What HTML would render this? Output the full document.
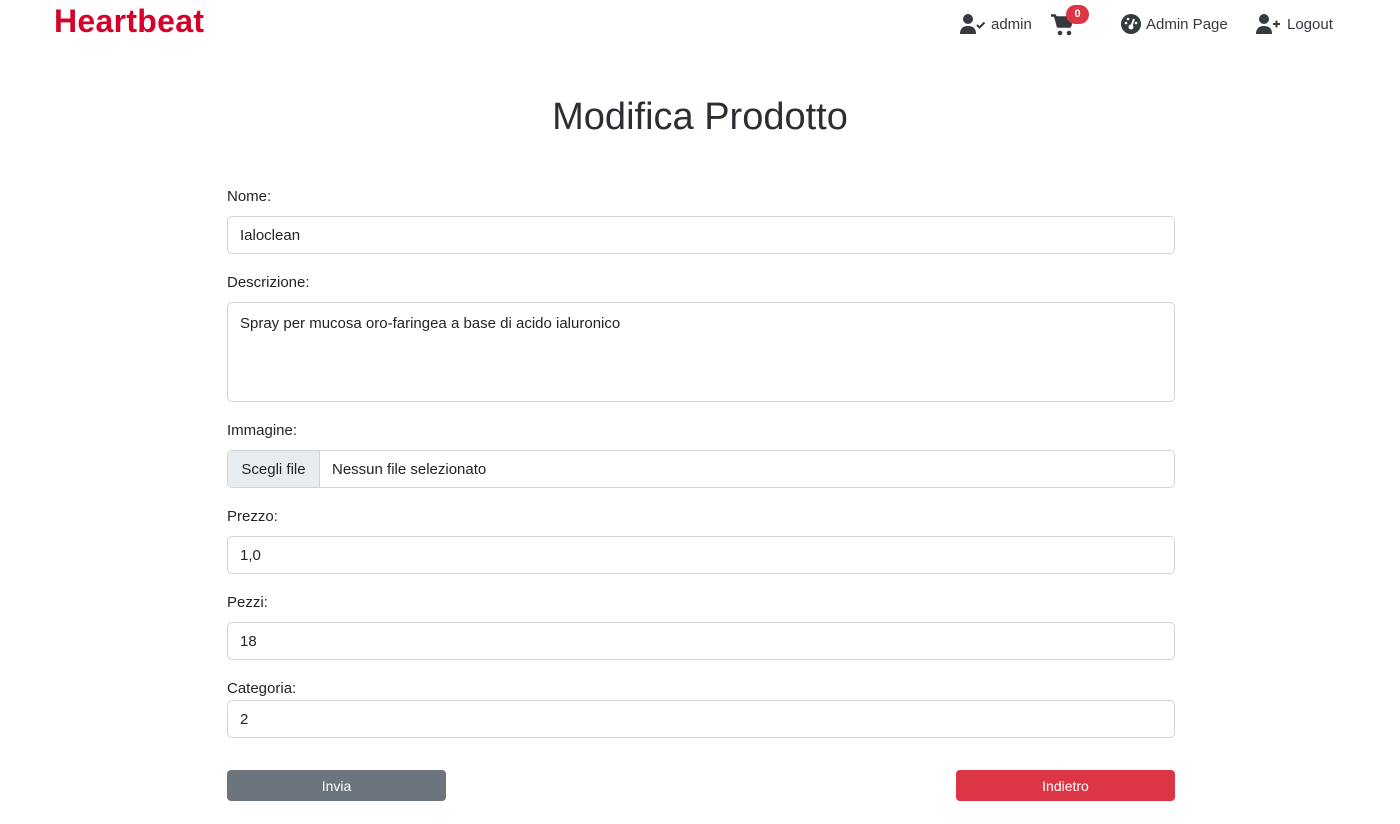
<!DOCTYPE html>
<html><head><meta charset="utf-8"><style>
*{box-sizing:border-box;margin:0;padding:0}
body{width:1400px;height:824px;background:#fff;font-family:"Liberation Sans",sans-serif;color:#212529;position:relative;overflow:hidden}
.a{position:absolute}
.brand{left:54px;top:3px;font-size:32px;font-weight:bold;color:#d6002a;letter-spacing:0.3px}
.nav{top:14px;font-size:15px;color:#343a40;display:flex;align-items:center;gap:5px}
h1{position:absolute;left:0;width:1400px;top:96px;text-align:center;font-size:38px;font-weight:300;color:#2b2f33}
.lbl{left:227px;font-size:15px;margin-top:1px}
.inp{left:227px;width:948px;height:38px;border:1px solid #ced4da;border-radius:5px;padding:0 12px;font-size:15px;line-height:38px}
.btn{top:770px;width:219px;height:31px;border-radius:4px;color:#fff;font-size:14px;text-align:center;line-height:32px}
</style></head><body>
<div class="a brand">Heartbeat</div>
<div class="a nav" style="left:960px"><svg width="26" height="20" viewBox="0 0 26 20"><circle cx="8" cy="5" r="5" fill="#343a40"/><path d="M0 20q0-8 8-8q8 0 8 8z" fill="#343a40"/><path d="M17 11l2.5 2.5 5-5" stroke="#343a40" stroke-width="2" fill="none"/></svg>admin</div>
<div class="a" style="left:1051px;top:14px"><svg width="24" height="22" viewBox="0 0 24 22"><path d="M0 1.5h4l3 11h12l3-9H5" fill="#343a40" stroke="#343a40" stroke-width="2.5" stroke-linejoin="round"/><circle cx="9" cy="19" r="2.3" fill="#343a40"/><circle cx="18" cy="19" r="2.3" fill="#343a40"/></svg></div>
<div class="a" style="left:1066px;top:5px;width:23px;height:19px;border-radius:10px;background:#dc3545;color:#fff;font-size:11px;font-weight:bold;text-align:center;line-height:19px">0</div>
<div class="a nav" style="left:1121px"><svg width="20" height="20" viewBox="0 0 20 20"><circle cx="10" cy="10" r="10" fill="#343a40"/><circle cx="10" cy="13" r="2.5" fill="#fff"/><path d="M10 13l3-8" stroke="#fff" stroke-width="2"/><circle cx="5" cy="9" r="1.3" fill="#fff"/><circle cx="7" cy="5" r="1.3" fill="#fff"/><circle cx="15" cy="9" r="1.3" fill="#fff"/></svg>Admin Page</div>
<div class="a nav" style="left:1256px"><svg width="26" height="20" viewBox="0 0 26 20"><circle cx="8" cy="5" r="5" fill="#343a40"/><path d="M0 20q0-8 8-8q8 0 8 8z" fill="#343a40"/><path d="M17 10h7M20.5 6.5v7" stroke="#343a40" stroke-width="2"/></svg>Logout</div>
<h1>Modifica Prodotto</h1>
<div class="a lbl" style="top:187px">Nome:</div>
<div class="a inp" style="top:216px">Ialoclean</div>
<div class="a lbl" style="top:273px">Descrizione:</div>
<div class="a inp" style="top:302px;height:100px;line-height:20px;padding-top:11px">Spray per mucosa oro-faringea a base di acido ialuronico</div>
<div class="a lbl" style="top:421px">Immagine:</div>
<div class="a inp" style="top:450px;padding:0;line-height:36px"><span style="display:inline-block;width:92px;height:36px;background:#e9ecef;border-right:1px solid #ced4da;text-align:center;border-radius:5px 0 0 5px;line-height:38px">Scegli file</span><span style="padding-left:12px;line-height:38px">Nessun file selezionato</span></div>
<div class="a lbl" style="top:507px">Prezzo:</div>
<div class="a inp" style="top:536px">1,0</div>
<div class="a lbl" style="top:593px">Pezzi:</div>
<div class="a inp" style="top:622px">18</div>
<div class="a lbl" style="top:679px">Categoria:</div>
<div class="a inp" style="top:700px">2</div>
<div class="a btn" style="left:227px;background:#6c757d">Invia</div>
<div class="a btn" style="left:956px;background:#dc3545">Indietro</div>
</body></html>
